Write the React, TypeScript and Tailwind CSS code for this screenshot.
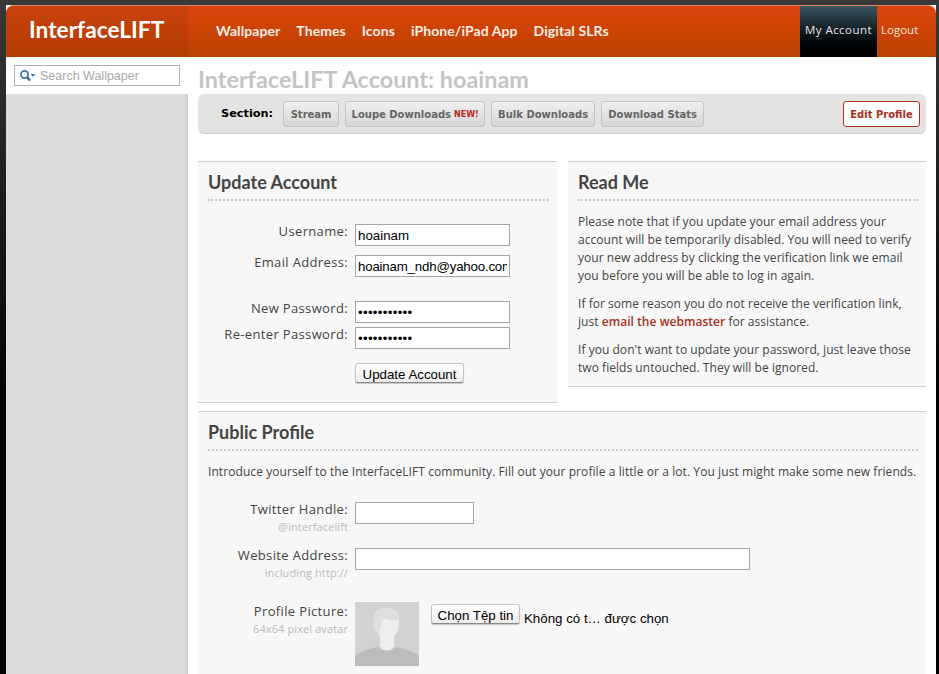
const bodyFont = "font-['Open_Sans','DejaVu_Sans',sans-serif]";
const headFont = "font-['Lato','Open_Sans',sans-serif]";

const navLinks = ["Wallpaper", "Themes", "Icons", "iPhone/iPad App", "Digital SLRs"];

function SectionButton({ children, className }: { children: React.ReactNode; className?: string }) {
  return (
    <span className={`flex h-[26px] items-center justify-center rounded-[3px] border border-[#c4c4c4] bg-gradient-to-b from-[#f0f0f0] to-[#d6d6d6] pt-[2px] font-['DejaVu_Sans',sans-serif] text-[10px] font-bold text-[#666] ${className ?? ""}`}>
      {children}
    </span>
  );
}

function FieldRow({ label, hint, children, className, labelClass = "-mt-[2px]" }: { label: string; hint?: string; children: React.ReactNode; className?: string; labelClass?: string }) {
  return (
    <div className={`flex ${className ?? ""}`}>
      <div className={`w-[150px] shrink-0 text-right ${labelClass}`}>
        <div className={`${bodyFont} text-[13px] leading-[18px] tracking-[0.35px] text-[#444]`}>{label}</div>
        {hint && <div className={`${bodyFont} mt-[2px] text-[11px] leading-[14px] tracking-[0.1px] text-[#bbb]`}>{hint}</div>}
      </div>
      <div className="ml-[7px]">{children}</div>
    </div>
  );
}

function TextBox({ value = "", className, type = "text" }: { value?: string; className: string; type?: string }) {
  return (
    <input
      readOnly
      type={type}
      value={value}
      className={`block h-[22px] border border-[#a5a5a5] bg-white px-[2px] font-['Liberation_Sans',sans-serif] text-[13.3px] text-black outline-none ${className}`}
    />
  );
}

function Heading({ children }: { children: React.ReactNode }) {
  return (
    <div className="mr-[8px] ml-[10px] border-b-2 border-dotted border-[#ccc] pt-[10px] pb-[7px]">
      <h2 className={`${headFont} text-[18px] leading-[20px] font-bold text-[#444]`}>{children}</h2>
    </div>
  );
}

function NativeButton({ children, className }: { children: React.ReactNode; className?: string }) {
  return (
    <button className={`flex items-center justify-center rounded-[3px] border border-[#c4c4c4] border-b-[#8a8a8a] bg-gradient-to-b from-white to-[#ececec] pt-[3px] font-['Liberation_Sans',sans-serif] text-[13.3px] leading-[15px] text-black shadow-[0_1px_1px_rgba(0,0,0,0.2)] ${className ?? ""}`}>
      {children}
    </button>
  );
}

export default function App() {
  return (
    <div className="h-[674px] w-[939px] overflow-hidden bg-[#333]">
      <div className="h-[5px] bg-[#383838]" />
      <div className="flex">
        <div className="h-[669px] w-[6px] shrink-0 bg-[linear-gradient(#383838,#000_400px)]" />

        <div className="w-[930px] shrink-0 bg-white">
          {/* header */}
          <header className="flex h-[52px] overflow-hidden rounded-t-[8px] border-t border-[#d98a68] bg-gradient-to-b from-[#dc430c] to-[#ba4200]">
            <div className={`flex w-[182px] shrink-0 items-center bg-gradient-to-b from-[#c9410e] to-[#b33d00] pb-[2px] pl-[23px] ${headFont} text-[22.7px] font-bold text-white`}>
              InterfaceLIFT
            </div>
            <nav className={`flex flex-1 items-center gap-[16px] pb-[3px] pl-[28px] ${headFont} text-[14px] font-bold tracking-[0.08px] text-[#fbeee6]`}>
              {navLinks.map((link) => (
                <a key={link}>{link}</a>
              ))}
            </nav>
            <a className={`flex w-[77px] items-center justify-center bg-gradient-to-b from-[#3b5560] to-black pb-[3px] ${bodyFont} text-[11.5px] tracking-[0.45px] text-[#e4e4e4]`}>
              My Account
            </a>
            <a className={`flex w-[59px] items-center pb-[3px] pl-[4px] ${bodyFont} text-[11.5px] text-[#f8e6da]`}>Logout</a>
          </header>

          <div className="flex">
            {/* sidebar */}
            <aside className="h-[617px] w-[182px] shrink-0 bg-[#dddddd] shadow-[inset_-4px_0_4px_-3px_rgba(0,0,0,0.1)]">
              <div className="flex h-[37px] items-start bg-white pt-[8px] pl-[8px]">
                <div className="flex h-[21px] w-[166px] items-center border border-[#a9b0b8] bg-white pl-[4px]">
                  <svg width="17" height="13" viewBox="0 0 17 13" className="shrink-0">
                    <circle cx="5.5" cy="5.5" r="3.6" fill="none" stroke="#3f74b0" strokeWidth="1.8" />
                    <path d="M8 8 L11 11.5" stroke="#2f5f98" strokeWidth="2.2" />
                    <path d="M11.5 5 h5 l-2.5 3 z" fill="#4a7ab0" />
                  </svg>
                  <span className="ml-[4px] pt-[1px] font-['Liberation_Sans',sans-serif] text-[12.5px] text-[#a9a9a9]">Search Wallpaper</span>
                </div>
              </div>
            </aside>

            {/* main */}
            <main className="min-w-0 flex-1 pl-[10px]">
              <h1 className={`${headFont} mt-[8px] mb-[1px] text-[23.4px] leading-[28px] font-bold text-[#c4c4c4]`}>InterfaceLIFT Account: hoainam</h1>

              <div className="flex h-[40px] w-[728px] items-center rounded-[6px] border-b border-[#d0d0d0] bg-[#e3e3e3] pr-[6px]">
                <span className="ml-[23px] pt-[1px] font-['DejaVu_Sans',sans-serif] text-[11.3px] font-bold text-black">Section:</span>
                <div className="ml-[10px] flex gap-[6px]">
                  <SectionButton className="w-[56px]">Stream</SectionButton>
                  <SectionButton className="w-[140px]">
                    Loupe Downloads <span className="ml-[3px] text-[8px] text-[#b3261a]">NEW!</span>
                  </SectionButton>
                  <SectionButton className="w-[104px]">Bulk Downloads</SectionButton>
                  <SectionButton className="w-[103px]">Download Stats</SectionButton>
                </div>
                <span className="ml-auto flex h-[26px] w-[77px] items-center justify-center rounded-[3px] border border-[#a8301c] bg-white pt-[2px] font-['DejaVu_Sans',sans-serif] text-[10px] font-bold text-[#a8301c]">
                  Edit Profile
                </span>
              </div>

              <div className="mt-[27px] flex items-start gap-[11px]">
                <section className="h-[242px] w-[359px] border-y border-[#cfcfcf] bg-[#f7f7f7]">
                  <Heading>Update Account</Heading>
                  <div className="pt-[23px]">
                    <FieldRow label="Username:">
                      <TextBox value="hoainam" className="w-[155px]" />
                    </FieldRow>
                    <FieldRow label="Email Address:" className="mt-[9px]">
                      <TextBox value="hoainam_ndh@yahoo.com" className="w-[155px] tracking-[-0.2px]" />
                    </FieldRow>
                    <FieldRow label="New Password:" className="mt-[24px]">
                      <TextBox type="password" value="hoainam1234" className="w-[155px] tracking-[0.3px]" />
                    </FieldRow>
                    <FieldRow label="Re-enter Password:" className="mt-[4px]">
                      <TextBox type="password" value="hoainam1234" className="w-[155px] tracking-[0.3px]" />
                    </FieldRow>
                    <div className="mt-[14px] ml-[157px]">
                      <NativeButton className="h-[20px] w-[109px]">Update Account</NativeButton>
                    </div>
                  </div>
                </section>

                <section className="h-[226px] w-[358px] border-y border-[#cfcfcf] bg-[#f7f7f7]">
                  <Heading>Read Me</Heading>
                  <div className={`px-[10px] pt-[12px] ${bodyFont} text-[12px] leading-[18px] tracking-[0.04px] text-[#444]`}>
                    <p>Please note that if you update your email address your account will be temporarily disabled. You will need to verify your new address by clicking the verification link we email you before you will be able to log in again.</p>
                    <p className="mt-[10px]">
                      If for some reason you do not receive the verification link, just <a className="font-semibold text-[#a8301c]">email the webmaster</a> for assistance.
                    </p>
                    <p className="mt-[10px]">If you don't want to update your password, just leave those two fields untouched. They will be ignored.</p>
                  </div>
                </section>
              </div>

              <section className="mt-[8px] h-[270px] w-[728px] border-t border-[#cfcfcf] bg-[#f7f7f7]">
                <Heading>Public Profile</Heading>
                <p className={`mx-[10px] mt-[12px] ${bodyFont} text-[12px] leading-[18px] tracking-[0.08px] whitespace-nowrap text-[#444]`}>
                  Introduce yourself to the InterfaceLIFT community. Fill out your profile a little or a lot. You just might make some new friends.
                </p>
                <FieldRow label="Twitter Handle:" hint="@interfacelift" className="mt-[21px] h-[46px]">
                  <TextBox className="w-[119px]" />
                </FieldRow>
                <FieldRow label="Website Address:" hint="including http://" className="h-[54px]">
                  <TextBox className="w-[395px]" />
                </FieldRow>
                <FieldRow label="Profile Picture:" hint="64x64 pixel avatar" labelClass="">
                  <div className="flex items-start">
                    <svg width="64" height="64" viewBox="0 0 64 64" className="shrink-0">
                      <rect width="64" height="64" fill="#d2d2d2" />
                      <path d="M0 64 V54 Q3 50 22 45 Q32 52 42 45 Q61 50 64 54 V64 Z" fill="#bcbcbc" />
                      <path d="M25 32 h14 v13 q-7 7 -14 0 Z" fill="#ededed" />
                      <path d="M19 18 Q19 6 32 6 Q44 6 44 20 Q44 32 36 37 Q31 39 26 35 Q19 29 19 18 Z" fill="#ededed" />
                      <path d="M19 27 Q15 7 32 6 Q45 6 44 17 Q36 20 29 16 Q26 22 24 32 Q21 31 19 27 Z" fill="#dedede" />
                    </svg>
                    <NativeButton className="mt-[2px] ml-[12px] h-[20px] w-[89px]">Chọn Tệp tin</NativeButton>
                    <span className="mt-[9px] ml-[4px] font-['Liberation_Sans',sans-serif] text-[13.3px] leading-[16px] whitespace-nowrap text-black">Không có t… được chọn</span>
                  </div>
                </FieldRow>
              </section>
            </main>
          </div>
        </div>
        <div className="h-[669px] w-[3px] shrink-0 bg-[linear-gradient(#383838,#000_400px)]" />
      </div>
    </div>
  );
}
